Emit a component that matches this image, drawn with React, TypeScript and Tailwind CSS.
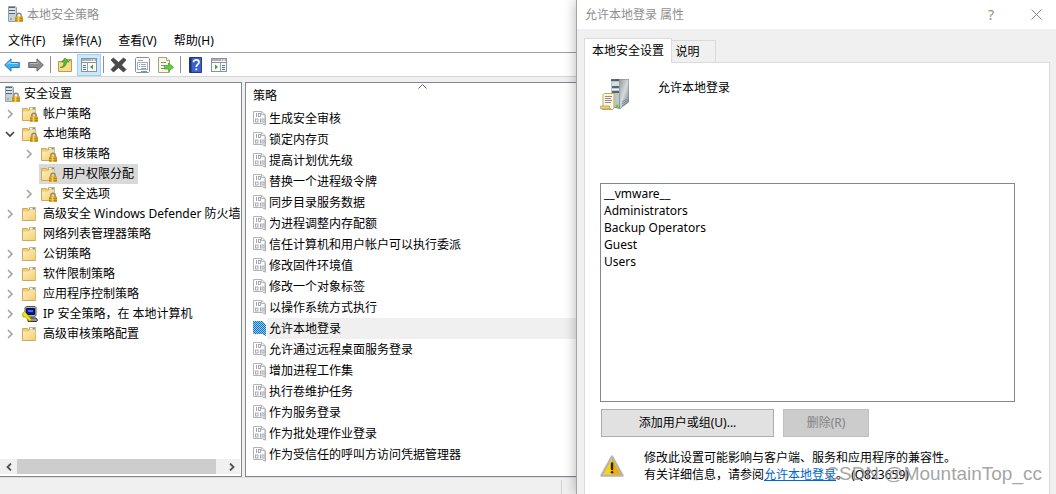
import { useState } from "react";
import type { ReactNode } from "react";

type IconProps = { className?: string };

function Padlock() {
  return (
    <g>
      <path d="M9.800 11V9.400a2.200 2.200 0 0 1 4.400 0V11" fill="none" stroke="#8f8a7a" strokeWidth="1.400" />
      <rect x="8" y="10.500" width="8" height="5.500" fill="#d9a21f" />
      <path d="M8 12.500h8M8 14.500h8" stroke="#b98512" strokeWidth="1" />
      <path d="M11.500 11v5" stroke="#f3d169" strokeWidth="1.800" />
    </g>
  );
}

function ServerLock({ className }: IconProps) {
  return (
    <svg viewBox="0 0 16 16" className={className} aria-hidden="true">
      <path d="M1.500.5h7l1 1v13l-1 1h-7z" fill="#c5d0d8" stroke="#94a2ab" />
      <path d="M2 1.500h6M2 4.500h6M2 7.500h6" stroke="#56656e" />
      <path d="M2 3h6M2 6h6" stroke="#f1f6f9" />
      <circle cx="4" cy="13" r=".8" fill="#3e9a3c" />
      <Padlock />
    </svg>
  );
}

function Folder({ className, locked = false }: IconProps & { locked?: boolean }) {
  return (
    <svg viewBox="0 0 16 16" className={className} aria-hidden="true">
      <defs>
        <linearGradient id="folder-face" x1="0" y1="0" x2="1" y2="1">
          <stop offset="0" stopColor="#ffeeb8" />
          <stop offset="1" stopColor="#f3cf74" />
        </linearGradient>
      </defs>
      <path d="M.5 2.500h5l1 1.500h1V1.500h6V14.500H.5z" fill="#f0cb73" stroke="#cda85a" />
      <path d="M8 2.500h5.500" stroke="#fff" strokeWidth="1.400" />
      <path d="M10.500 2.500h2.500" stroke="#4a9be6" strokeWidth="1.400" />
      <path d="M1 5.500h6l1-1.500h5.500V14H1z" fill="url(#folder-face)" />
      {locked && <Padlock />}
    </svg>
  );
}

function ComputerIcon({ className }: IconProps) {
  return (
    <svg viewBox="0 0 16 16" className={className} aria-hidden="true">
      <path d="M3 1.500 5 .5h8l1 1v8l-2 1.500H5L3 9z" fill="#b9b9b9" stroke="#555" />
      <path d="M4.500 2.500h8v6h-8z" fill="#0712b9" stroke="#111" />
      <path d="M6 4h5v2H6z" fill="#3c6cf5" />
      <path d="M6 12h8l1.500 2-1 1.500H6z" fill="#999" stroke="#333" />
      <path d="M.5 7.500 2.500 5.500l2 2 5 6-1.500 2L3.500 11 1 11z" fill="#f3e600" stroke="#8b8300" strokeWidth=".6" />
    </svg>
  );
}

function PolicyIcon({ active = false }: { active?: boolean }) {
  return (
    <svg viewBox="0 0 14 15" className="h-[15px] w-[14px] shrink-0" aria-hidden="true">
      <path d="M.5.5h8.500l3 3v10.500L9.500 12.500H.5z" fill="#fdfdfd" stroke="#b4b4b4" />
      <path d="M8.500.5v3h3.500M12.500 4v10.500M10 13.500h3" fill="none" stroke="#b4b4b4" />
      <path d="M3.500 2v4M7.500 7.500v4" stroke="#a3a3b2" />
      <rect x="5.500" y="2.500" width="2" height="3" fill="none" stroke="#a3a3b2" strokeWidth=".9" />
      <rect x="2.500" y="8" width="2.500" height="3" fill="none" stroke="#a3a3b2" strokeWidth=".9" />
      <rect x="9" y="8" width="2" height="3" fill="none" stroke="#a3a3b2" strokeWidth=".9" />
      {active && (
        <>
          <defs>
            <pattern id="dither" width="2" height="2" patternUnits="userSpaceOnUse">
              <rect width="2" height="2" fill="#a9c4dc" />
              <rect width="1" height="1" fill="#0078d7" />
              <rect x="1" y="1" width="1" height="1" fill="#0078d7" />
            </pattern>
          </defs>
          <path d="M0 0h9l4 4v11l-3-2H1l-1-1z" fill="url(#dither)" />
        </>
      )}
    </svg>
  );
}

function Chevron({ open }: { open?: boolean }) {
  return (
    <svg viewBox="0 0 10 10" className="h-[10px] w-[10px]" aria-hidden="true">
      {open ? (
        <path d="M1 3l4 4 4-4" fill="none" stroke="#404040" strokeWidth="1.600" />
      ) : (
        <path d="M3 1l4 4-4 4" fill="none" stroke="#a3a3a3" strokeWidth="1.600" />
      )}
    </svg>
  );
}

function WindowGrid({ flip = false }: { flip?: boolean }) {
  return (
    <svg viewBox="0 0 16 14" className="h-[14px] w-[16px]" aria-hidden="true">
      <rect x=".5" y=".5" width="15" height="13" fill="#fafafa" stroke="#8b929a" />
      <path d="M1 2h14" stroke="#a9b0b8" strokeWidth="2" />
      <path d="M10 2h1M12 2h2" stroke="#fff" />
      <path d="M1 4.500h14" stroke="#8b929a" />
      <path d={flip ? "M9.500 5v8" : "M6.500 5v8"} stroke="#9aa1a9" />
      <path d={flip ? "M11 7.500h3M11 9.500h3M11 11.500h3" : "M2 7.500h3M2 9.500h3M2 11.500h3"} stroke="#4577b5" />
      <path d={flip ? "M4 6.500v5L7 9z" : "M12 6.500v5L9 9z"} fill="#44a52e" />
    </svg>
  );
}

function ToolButton({ label, pressed, children }: { label: string; pressed?: boolean; children: ReactNode }) {
  return (
    <button
      type="button"
      aria-label={label}
      className={
        pressed
          ? "flex h-[22px] w-[24px] items-center justify-center border border-[#99d1ff] bg-[#cce8ff]"
          : "flex h-[22px] w-[24px] items-center justify-center"
      }
    >
      {children}
    </button>
  );
}

function Separator() {
  return <span className="mx-[2px] h-[17px] w-px bg-[#909090]" />;
}

function BigArrow({ back = false }: { back?: boolean }) {
  return (
    <svg viewBox="0 0 16 14" className="h-[14px] w-[16px]" aria-hidden="true">
      {back ? (
        <>
          <path d="M.7 7 7 .8v3.700h8.300v5H7v3.700z" fill="#3eb0ee" stroke="#2679bb" />
          <path d="M3 6.500 6 3.500v2h8" fill="none" stroke="#a4e2ff" />
        </>
      ) : (
        <>
          <path d="M15.300 7 9 .8v3.700H.7v5H9v3.700z" fill="#8e8e8e" stroke="#666" />
          <path d="M2 5.500h8v-2" fill="none" stroke="#bbb" />
        </>
      )}
    </svg>
  );
}

function Toolbar() {
  return (
    <div role="toolbar" aria-label="工具栏" className="flex h-[24px] shrink-0 items-center border-b border-[#d7d7d7] bg-white">
      <ToolButton label="后退"><BigArrow back /></ToolButton>
      <ToolButton label="前进"><BigArrow /></ToolButton>
      <Separator />
      <ToolButton label="上一级">
        <svg viewBox="0 0 16 16" className="h-[16px] w-[16px]" aria-hidden="true">
          <path d="M1.500 4.500h6l1.500-2h5.500v12h-13z" fill="#f4cf78" stroke="#c39b42" />
          <path d="M2 6h12v8H2z" fill="#fbdc8e" />
          <path d="M11.500 3.500h2" stroke="#4a90d9" />
          <path d="M3 10.500C6 10 7 8 7 5H4.500L8 1l4 4H9.500C9.500 8.500 7 11 3 10.500z" fill="#50bb34" stroke="#338b20" strokeWidth=".6" />
        </svg>
      </ToolButton>
      <ToolButton label="显示/隐藏控制台树" pressed><WindowGrid /></ToolButton>
      <Separator />
      <ToolButton label="删除">
        <svg viewBox="0 0 17 16" className="h-[16px] w-[17px]" aria-hidden="true">
          <path d="M1 3 3.500 1l5 4.500 5-4.500L16 3l-4.500 5 4.500 4.500-2.500 2.500-5-4.500-5 4.500L1 12.500 5.500 8z" fill="#4b4b4b" stroke="#333" strokeWidth=".7" />
        </svg>
      </ToolButton>
      <ToolButton label="属性">
        <svg viewBox="0 0 15 16" className="h-[16px] w-[15px]" aria-hidden="true">
          <path d="M.5 1.500l1-1h12l1 1v13l-1 1h-12l-1-1z" fill="#fff" stroke="#8d8d8d" />
          <path d="M3 3.500h5M6 7.500h5M6 9.500h5M6 11.500h5" stroke="#96a4b4" />
          <rect x="2.500" y="5.500" width="10" height="7" fill="none" stroke="#a6adb5" />
          <path d="M4 7.500h1M4 9.500h1M6 14.500h6" stroke="#3ca9df" />
        </svg>
      </ToolButton>
      <ToolButton label="导出列表">
        <svg viewBox="0 0 16 16" className="h-[16px] w-[16px]" aria-hidden="true">
          <path d="M.5.5h8l3 3v12H.5z" fill="#fff8dc" stroke="#a5a08a" />
          <path d="M8.500.5v3h3" fill="#fff" stroke="#a5a08a" />
          <path d="M3 5.500h5M3 8.500h4M3 11.500h4" stroke="#8287a5" />
          <path d="M6.500 8.500h4V6l5 4.300-5 4.200V12h-4z" fill="#67c947" stroke="#399c26" strokeWidth=".7" />
        </svg>
      </ToolButton>
      <Separator />
      <ToolButton label="帮助">
        <svg viewBox="0 0 13 16" className="h-[16px] w-[13px]" aria-hidden="true">
          <path d="M.5.5h12v15H.5z" fill="#3d62cd" stroke="#27397e" />
          <path d="M1.500 1v14" stroke="#1f2f75" strokeWidth="2" />
          <path d="M4.500 5.200c0-3.200 5.500-3 5.500 0C10 7.500 7.300 7.300 7.300 10" fill="none" stroke="#fff" strokeWidth="1.700" />
          <rect x="6.400" y="11.500" width="1.800" height="1.800" fill="#fff" />
        </svg>
      </ToolButton>
      <ToolButton label="显示/隐藏操作窗格"><WindowGrid flip /></ToolButton>
    </div>
  );
}

type TreeNode = { name: string; level: 1 | 2; icon: "lock" | "folder" | "pc"; toggle?: "open" | "closed" };

const nodes: TreeNode[] = [
  { name: "帐户策略", level: 1, icon: "lock", toggle: "closed" },
  { name: "本地策略", level: 1, icon: "lock", toggle: "open" },
  { name: "审核策略", level: 2, icon: "lock", toggle: "closed" },
  { name: "用户权限分配", level: 2, icon: "lock" },
  { name: "安全选项", level: 2, icon: "lock", toggle: "closed" },
  { name: "高级安全 Windows Defender 防火墙", level: 1, icon: "folder", toggle: "closed" },
  { name: "网络列表管理器策略", level: 1, icon: "folder" },
  { name: "公钥策略", level: 1, icon: "folder", toggle: "closed" },
  { name: "软件限制策略", level: 1, icon: "folder", toggle: "closed" },
  { name: "应用程序控制策略", level: 1, icon: "folder", toggle: "closed" },
  { name: "IP 安全策略，在 本地计算机", level: 1, icon: "pc", toggle: "closed" },
  { name: "高级审核策略配置", level: 1, icon: "folder", toggle: "closed" },
];

function Tree() {
  const [selected, setSelected] = useState("用户权限分配");
  return (
    <div className="flex w-[242px] shrink-0 flex-col border border-l-0 border-[#828790] bg-white pr-px">
      <ul role="tree" aria-label="安全设置" className="flex-1 overflow-hidden pt-px">
        <li role="treeitem" aria-selected={false} className="flex h-[20px] items-center gap-1 pl-1">
          <ServerLock className="h-[16px] w-[16px] shrink-0" />
          安全设置
        </li>
        {nodes.map((n) => (
          <li
            key={n.name}
            role="treeitem"
            aria-selected={selected === n.name}
            onClick={() => setSelected(n.name)}
            className={n.level === 2 ? "flex h-[20px] items-center pl-[19px]" : "flex h-[20px] items-center"}
          >
            <span className="flex w-[20px] shrink-0 justify-center">
              {n.toggle && (
                <button type="button" aria-label={"展开或折叠 " + n.name}>
                  <Chevron open={n.toggle === "open"} />
                </button>
              )}
            </span>
            <span
              className={
                selected === n.name
                  ? "flex h-[20px] items-center gap-[5px] bg-[#d9d9d9] pr-[4px] pl-[2px] whitespace-nowrap"
                  : "flex h-[20px] items-center gap-[5px] pr-[4px] pl-[2px] whitespace-nowrap"
              }
            >
              {n.icon === "pc" ? (
                <ComputerIcon className="h-[16px] w-[16px] shrink-0" />
              ) : (
                <Folder className="h-[16px] w-[16px] shrink-0" locked={n.icon === "lock"} />
              )}
              {n.name}
            </span>
          </li>
        ))}
      </ul>
      <div className="mb-[2px] flex h-[15px] bg-[#f0f0f0]">
        <button type="button" aria-label="向左滚动" className="flex w-[17px] items-center justify-center">
          <svg viewBox="0 0 8 8" className="h-[8px] w-[8px]" aria-hidden="true">
            <path d="M6 .5 2.500 4 6 7.500" fill="none" stroke="#505050" strokeWidth="1.800" />
          </svg>
        </button>
        <span className="mr-[7px] flex-1 bg-[#cdcdcd]" />
        <button type="button" aria-label="向右滚动" className="flex w-[17px] items-center justify-center">
          <svg viewBox="0 0 8 8" className="h-[8px] w-[8px]" aria-hidden="true">
            <path d="M2 .5 5.500 4 2 7.500" fill="none" stroke="#505050" strokeWidth="1.800" />
          </svg>
        </button>
      </div>
    </div>
  );
}

const policies = [
  "生成安全审核",
  "锁定内存页",
  "提高计划优先级",
  "替换一个进程级令牌",
  "同步目录服务数据",
  "为进程调整内存配额",
  "信任计算机和用户帐户可以执行委派",
  "修改固件环境值",
  "修改一个对象标签",
  "以操作系统方式执行",
  "允许本地登录",
  "允许通过远程桌面服务登录",
  "增加进程工作集",
  "执行卷维护任务",
  "作为服务登录",
  "作为批处理作业登录",
  "作为受信任的呼叫方访问凭据管理器",
];

function PolicyList() {
  return (
    <div className="min-w-0 flex-1 border border-r-0 border-[#828790] bg-white">
      <table className="w-full border-collapse">
        <thead>
          <tr className="h-[25px]">
            <th scope="col" className="p-0 text-left font-normal">
              <button type="button" className="relative flex h-[25px] w-full items-center pt-px pl-[7px]">
                策略
                <svg viewBox="0 0 9 5" className="absolute top-[1px] left-[172px] h-[5px] w-[9px]" aria-hidden="true">
                  <path d="M.5 4.500l4-4 4 4" fill="none" stroke="#666" />
                </svg>
              </button>
            </th>
          </tr>
        </thead>
        <tbody>
          {policies.map((p) => (
            <tr key={p} className="h-[21px]">
              <td className="p-0">
                <div className="flex items-center pl-[7px]">
                  <PolicyIcon active={p === "允许本地登录"} />
                  <span
                    className={
                      p === "允许本地登录"
                        ? "h-[21px] flex-1 bg-[#f0f0f0] pt-px pl-[2px] leading-[20px]"
                        : "h-[21px] flex-1 pt-px pl-[2px] leading-[20px]"
                    }
                  >
                    {p}
                  </span>
                </div>
              </td>
            </tr>
          ))}
        </tbody>
      </table>
    </div>
  );
}

function PolicyWindow() {
  return (
    <section aria-label="本地安全策略" className="flex min-w-0 flex-col bg-white">
      <header className="flex h-[28px] shrink-0 items-center gap-[4px] pl-[7px] text-[#8f8f8f]">
        <ServerLock className="h-[16px] w-[16px]" />
        <h1 className="pt-px">本地安全策略</h1>
      </header>
      <nav aria-label="菜单" className="flex h-[25px] shrink-0 items-center gap-[17px] border-b border-[#a0a0a0] pt-[2px] pl-[8px]">
        <button type="button">文件(F)</button>
        <button type="button">操作(A)</button>
        <button type="button">查看(V)</button>
        <button type="button">帮助(H)</button>
      </nav>
      <Toolbar />
      <div className="flex flex-1 gap-[3px] bg-[#f0f0f0] pt-[5px]">
        <Tree />
        <PolicyList />
      </div>
      <footer className="flex h-[17px] shrink-0 justify-end border-t border-[#dcdcdc] bg-[#f0f0f0] pt-[2px]">
        <span className="w-[15px] border-l border-[#d0d0d0]" />
      </footer>
    </section>
  );
}

function ServerScroll() {
  return (
    <svg viewBox="0 0 30 32" className="h-[32px] w-[30px] shrink-0" aria-hidden="true">
      <defs>
        <linearGradient id="side" x1="0" y1="0" x2="1" y2="1">
          <stop offset="0" stopColor="#8d979c" />
          <stop offset=".5" stopColor="#d5dadc" />
          <stop offset="1" stopColor="#6c767c" />
        </linearGradient>
      </defs>
      <path d="M11 2 19 1l10 0v23l-9 7-9-2z" fill="#7b878d" />
      <path d="M19 1.500 28.500 1.500V24L20 30.500z" fill="url(#side)" />
      <path d="M11 2.500h8v27l-8-1z" fill="#b8c6ce" />
      <path d="M11 2h8M12 9h7M12 14h7" stroke="#39474f" strokeWidth="1.300" />
      <path d="M12 5h7M12 7h7M12 11.500h7" stroke="#f4f8fa" strokeWidth="1.200" />
      <path d="M22 24l5-3M22 26l5-3M22 28l5-3" stroke="#6d777d" strokeWidth=".7" />
      <circle cx="17" cy="28" r="1.500" fill="#79c51f" />
      <path d="M3 17.500c0-1.500 1-2 2-2h10c-1 1-1 2-1 3v10c0 2-1 3-2 3H3c-2 0-2.500-3-1-3h1z" fill="#fff5cf" stroke="#c3a967" />
      <path d="M.5 28h9c0 2 .5 3 1.500 3H2c-2 0-2.500-2-1.500-3z" fill="#e6cd89" stroke="#b39654" strokeWidth=".7" />
      <path d="M5 18.500h7M5 20.500h6M5 22.500h7M5 24.500h6" stroke="#8d87a8" />
    </svg>
  );
}

function WarningIcon() {
  return (
    <svg viewBox="0 0 24 22" className="h-[22px] w-[24px] shrink-0" aria-hidden="true">
      <path d="M12 1.500 22.500 20.500H1.500z" fill="#f9c80e" stroke="#b4b4b4" strokeWidth="2.500" strokeLinejoin="round" />
      <path d="M12 3.500 20.500 19.500H3.500z" fill="#fbd21b" />
      <path d="M12 3.500 20.500 19.500H12z" fill="#f0ad08" />
      <path d="M12 8.500v5.500" stroke="#24251e" strokeWidth="2.400" strokeLinecap="round" />
      <circle cx="12" cy="17.200" r="1.300" fill="#24251e" />
    </svg>
  );
}

function PropertiesDialog() {
  return (
    <section
      role="dialog"
      aria-label="允许本地登录 属性"
      className="relative flex min-w-0 flex-col border-l border-[#a5a5a5] bg-[#f0f0f0] shadow-[0_0_12px_rgba(0,0,0,0.3)]"
    >
      <header className="flex h-[29px] shrink-0 items-center bg-white pr-[14px] pl-[8px] text-[#8f8f8f]">
        <h2 className="flex-1">允许本地登录 属性</h2>
        <button type="button" aria-label="帮助" className="mr-[37px] text-[14px] leading-[16px]">?</button>
        <button type="button" aria-label="关闭">
          <svg viewBox="0 0 11 11" className="h-[11px] w-[11px]" aria-hidden="true">
            <path d="M.5.5l10 10M10.500.5l-10 10" stroke="#888" />
          </svg>
        </button>
      </header>
      <div role="tablist" className="flex h-[33px] shrink-0 items-end pl-[7px]">
        <button type="button" role="tab" aria-selected="true" className="z-10 -mb-px h-[25px] border border-b-0 border-[#dadada] bg-white px-[7px]">
          本地安全设置
        </button>
        <button type="button" role="tab" aria-selected="false" className="h-[22px] w-[44px] border border-b-0 border-l-0 border-[#dadada] pr-[12px]">
          说明
        </button>
      </div>
      <div role="tabpanel" className="mr-[6px] ml-[7px] flex flex-1 flex-col border border-b-0 border-[#dadada] bg-white pr-[34px] pl-[15px]">
        <div className="flex gap-[28px] pt-[15px]">
          <ServerScroll />
          <p className="pt-[2px]">允许本地登录</p>
        </div>
        <select
          multiple
          aria-label="用户和组"
          className="mt-[73px] h-[219px] w-full appearance-none overflow-hidden rounded-none border border-[#828790] bg-white px-[1px] py-px outline-none"
        >
          {["__vmware__", "Administrators", "Backup Operators", "Guest", "Users"].map((u) => (
            <option key={u} className="h-[17px] min-h-0 p-0 px-[2px] leading-[17px]">
              {u}
            </option>
          ))}
        </select>
        <div className="mt-[7px] flex gap-[9px] pl-px">
          <button type="button" className="h-[28px] w-[173px] border border-[#adadad] bg-[#e1e1e1]">
            添加用户或组(U)...
          </button>
          <button type="button" disabled className="h-[28px] w-[86px] border border-[#bfbfbf] bg-[#cccccc] text-[#838383]">
            删除(R)
          </button>
        </div>
        <div className="mt-[12px] flex items-start gap-[20px] whitespace-nowrap">
          <div className="pt-[6px]">
            <WarningIcon />
          </div>
          <p className="leading-[17px]">
            修改此设置可能影响与客户端、服务和应用程序的兼容性。
            <br />
            有关详细信息，请参阅
            <a href="#q823659" className="text-[#0066cc] underline">允许本地登录</a>。 (Q823659)
          </p>
        </div>
      </div>
      <span className="pointer-events-none absolute right-[14px] bottom-[8px] z-20 font-['Liberation_Sans','Noto_Sans_CJK_SC',sans-serif] text-[19px] leading-[24px] whitespace-nowrap text-[#8c8c8c]/80">
        CSDN @MountainTop_cc
      </span>
    </section>
  );
}

export default function App() {
  return (
    <main className="grid min-h-screen grid-cols-[576fr_480fr] overflow-hidden font-['Noto_Sans','Noto_Sans_CJK_SC',sans-serif] text-[12px] leading-[16px] text-black">
      <PolicyWindow />
      <PropertiesDialog />
    </main>
  );
}
